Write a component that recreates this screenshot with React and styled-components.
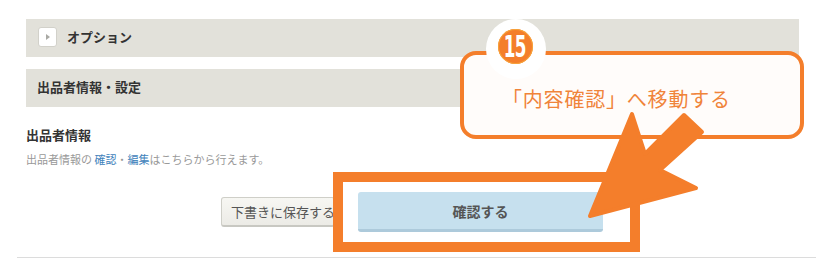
import React from "react";
import styled, { createGlobalStyle } from "styled-components";

const GlobalStyle = createGlobalStyle`
  html, body {
    margin: 0;
    padding: 0;
    background: #fff;
  }
  body {
    font-family: "Noto Sans CJK JP", "Noto Sans", sans-serif;
    color: #333;
  }
`;

const ORANGE = "#f47e2b";

const Page = styled.div`
  position: relative;
  width: 824px;
  height: 271px;
  overflow: hidden;
  padding: 19px 25px 0 26px;
  box-sizing: border-box;
`;

const Bars = styled.div`
  display: flex;
  flex-direction: column;
  gap: 12px;
`;

const Bar = styled.div`
  height: 38px;
  box-sizing: border-box;
  background: #e2e1da;
  display: flex;
  align-items: center;
  gap: 10px;
  padding-left: ${(p) => p.$indent}px;
  padding-bottom: 3px;
  font-size: 13px;
  font-weight: 700;
  color: #333;
`;

const ToggleBox = styled.span`
  width: 17px;
  height: 18px;
  border: 1px solid #d2d1ca;
  border-radius: 3px;
  background: #fff;
  display: flex;
  align-items: center;
  justify-content: center;
  &::after {
    content: "";
    border-left: 4px solid #a9a9a4;
    border-top: 3px solid transparent;
    border-bottom: 3px solid transparent;
    margin-left: 1px;
  }
`;

const Heading = styled.h3`
  margin: 19px 0 0;
  font-size: 13px;
  line-height: 17px;
  font-weight: 700;
  color: #333;
`;

const Note = styled.p`
  margin: 8px 0 0;
  font-size: 11px;
  line-height: 16px;
  color: #999;
`;

const TextLink = styled.a`
  color: #3f82bb;
  text-decoration: none;
`;

const Actions = styled.div`
  margin-top: 25px;
  margin-left: -26px;
  margin-right: -25px;
  display: flex;
  justify-content: center;
  align-items: center;
  gap: 23px;
  height: 40px;
`;

const DraftButton = styled.button`
  height: 30px;
  width: 114px;
  box-sizing: border-box;
  padding: 0 0 0 9px;
  text-align: left;
  border: 1px solid #cfcfc8;
  border-bottom: 2px solid #c8c8c2;
  border-radius: 3px;
  background: linear-gradient(#f7f7f3, #ecebe6);
  color: #555;
  font-family: inherit;
  font-size: 13px;
  white-space: nowrap;
`;

const ConfirmButton = styled.button`
  height: 40px;
  width: 245px;
  box-sizing: border-box;
  border: 0;
  border-bottom: 3px solid #adcadb;
  border-radius: 3px;
  background: #c6e0ee;
  color: #555;
  font-family: inherit;
  font-size: 14px;
  font-weight: 700;
`;

const Divider = styled.hr`
  margin: 25px -17px 0 -9px;
  border: 0;
  border-top: 1px solid #dcdcdc;
`;

const Frame = styled.div`
  position: absolute;
  left: 333px;
  top: 172px;
  width: 307px;
  height: 80px;
  box-sizing: border-box;
  border: 10px solid ${ORANGE};
`;

const Callout = styled.div`
  position: absolute;
  left: 460px;
  top: 51px;
  width: 344px;
  height: 88px;
  box-sizing: border-box;
  border: 4px solid ${ORANGE};
  border-radius: 16px;
  background: #fffcfa;
  display: flex;
  align-items: center;
  padding: 6px 0 0 38px;
  color: #f0843a;
  font-size: 20px;
  letter-spacing: 0.8px;
`;

const BadgeRing = styled.div`
  position: absolute;
  left: 486px;
  top: 19px;
  width: 60px;
  height: 60px;
  border-radius: 50%;
  background: #fff;
  display: flex;
  justify-content: center;
  padding-top: 10px;
  padding-right: 2px;
  box-sizing: border-box;
`;

const Badge = styled.div`
  width: 35px;
  height: 35px;
  border-radius: 50%;
  background: ${ORANGE};
  box-shadow: 0 0 0 1px #f7a33a inset;
  display: flex;
  align-items: center;
  justify-content: center;
`;

const BadgeNumber = styled.span`
  display: inline-block;
  color: #fff;
  font-family: "DejaVu Sans", sans-serif;
  font-weight: 700;
  font-size: 30px;
  line-height: 30px;
  letter-spacing: -1px;
  transform: scaleX(0.56);
  margin-top: 1px;
`;

const Overlay = styled.svg`
  position: absolute;
  left: 0;
  top: 0;
  pointer-events: none;
`;

export default function App() {
  return (
    <>
      <GlobalStyle />
      <Page>
        <Bars>
          <Bar $indent={12}>
            <ToggleBox />
            オプション
          </Bar>
          <Bar $indent={11}>出品者情報・設定</Bar>
        </Bars>
        <Heading>出品者情報</Heading>
        <Note>
          出品者情報の <TextLink href="#">確認</TextLink>・<TextLink href="#">編集</TextLink>はこちらから行えます。
        </Note>
        <Actions>
          <DraftButton>下書きに保存する</DraftButton>
          <ConfirmButton>確認する</ConfirmButton>
        </Actions>
        <Divider />

        <Frame />
        <Callout>「内容確認」へ移動する</Callout>
        <BadgeRing>
          <Badge>
            <BadgeNumber>15</BadgeNumber>
          </Badge>
        </BadgeRing>
        <Overlay width="824" height="271" viewBox="0 0 824 271">
          <polygon
            points="590,216 632,114 645,154 684,115 702,132 660,170 696,188"
            fill={ORANGE}
            stroke={ORANGE}
            strokeWidth="4"
            strokeLinejoin="round"
          />
        </Overlay>
      </Page>
    </>
  );
}
